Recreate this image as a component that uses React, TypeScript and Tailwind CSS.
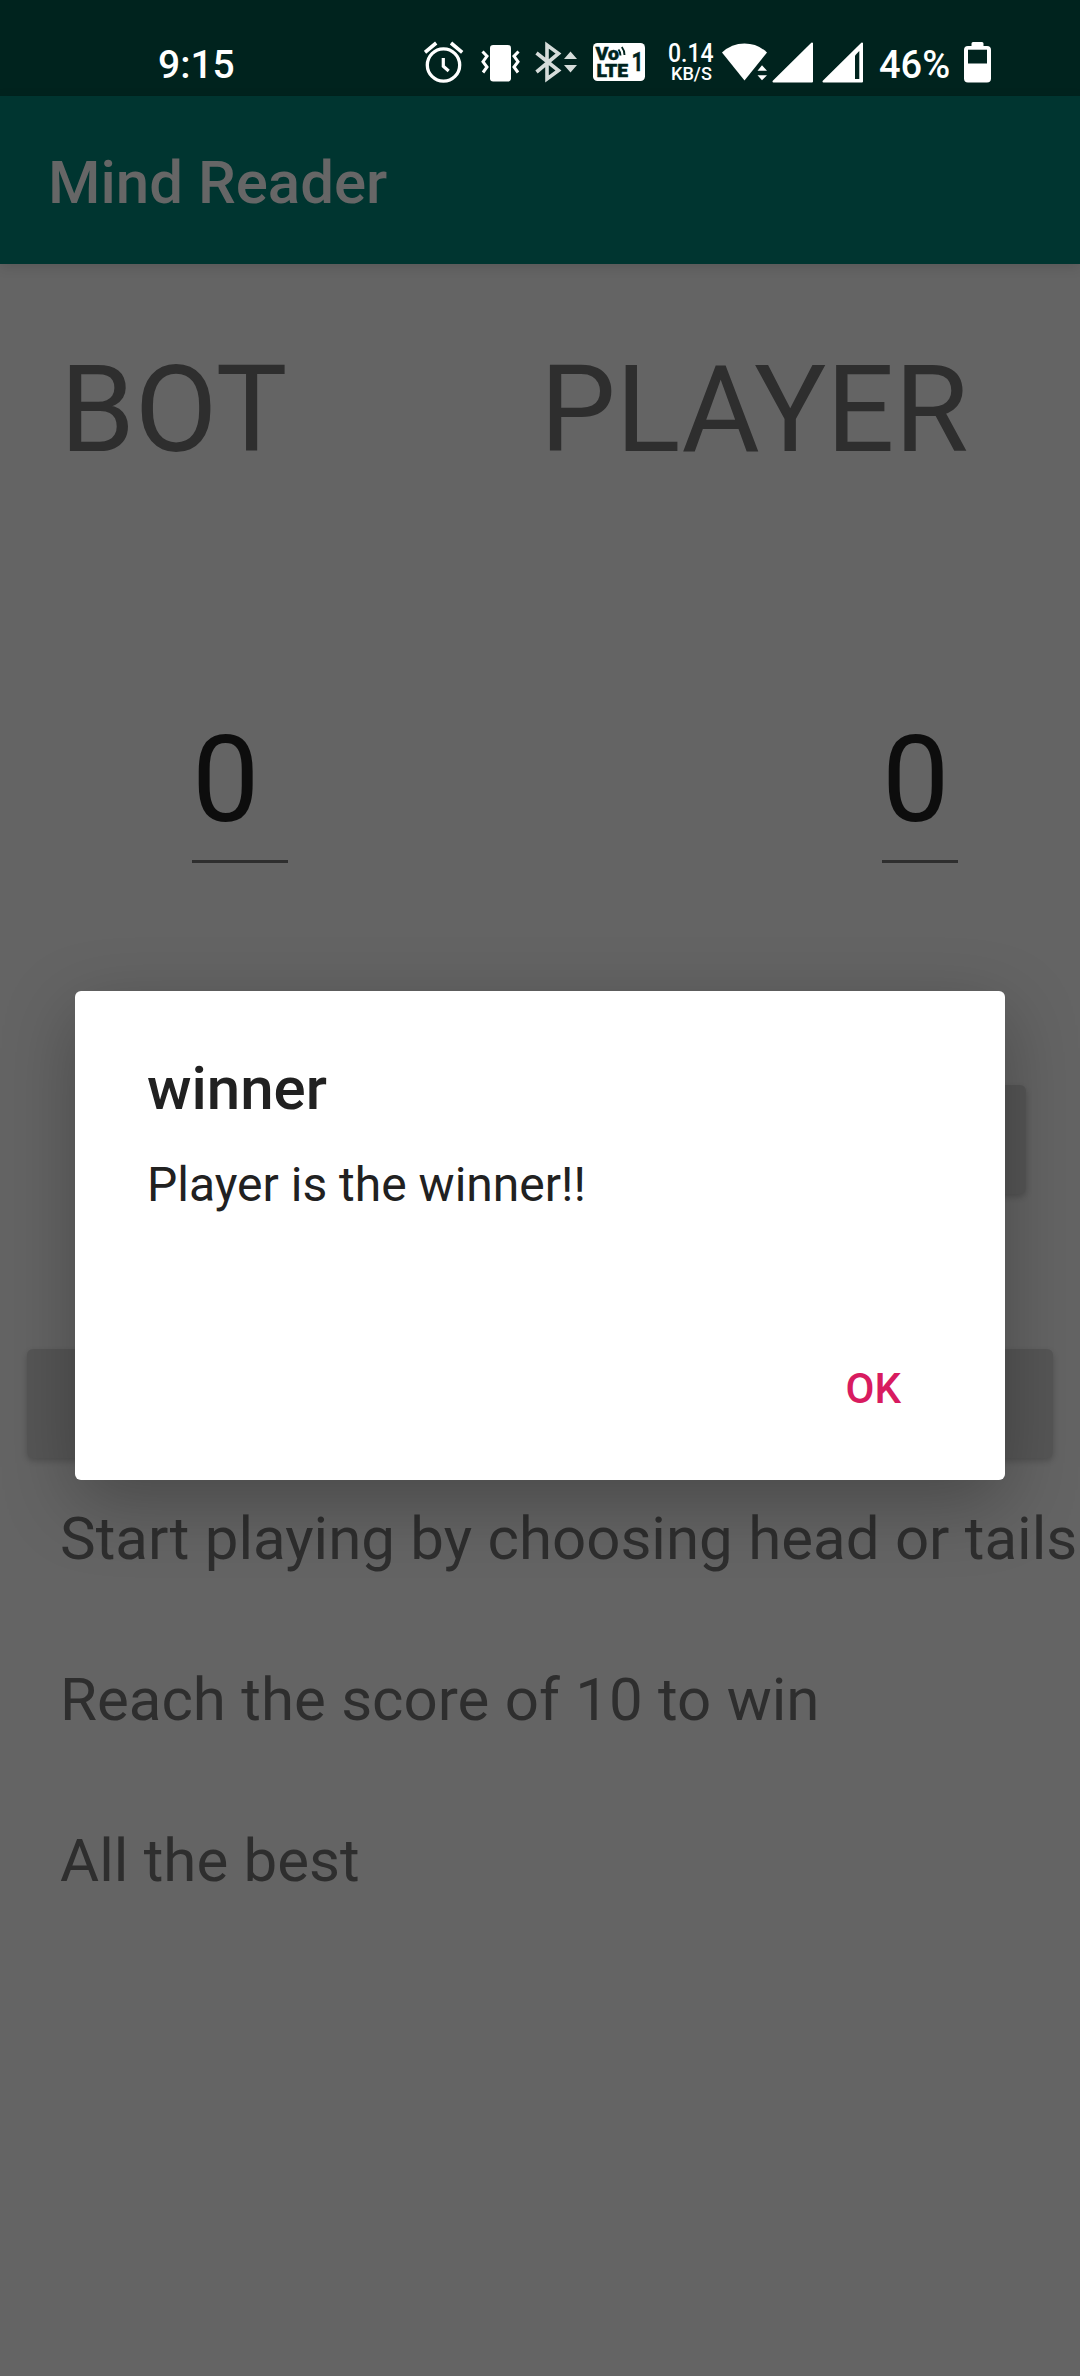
import React from "react";

function AlarmIcon() {
  return (
    <svg className="absolute left-[424px] top-[40px]" width="40" height="44" viewBox="0 0 40 44" fill="none" stroke="#fff">
      <circle cx="19.5" cy="25" r="16.2" strokeWidth="3.3" />
      <path d="M19.3 18v8.2l5.4 4.8" strokeWidth="3.2" />
      <path d="M1 12.3 12.2 3M27 3l11.2 9.3" strokeWidth="3.6" />
    </svg>
  );
}

function VibrateIcon() {
  return (
    <svg className="absolute left-[480px] top-[44px]" width="41" height="40" viewBox="0 0 41 40" fill="none">
      <rect x="10" y="1" width="21" height="36.5" rx="3.2" fill="#fff" />
      <path d="m2.500 7.500 4.500 4.700-4 5.500 4 5.300-4 5.500" stroke="#fff" strokeWidth="3" />
      <path d="m38.500 7.500-4.500 4.700 4 5.500-4 5.300 4 5.500" stroke="#fff" strokeWidth="3" />
    </svg>
  );
}

function BluetoothIcon() {
  return (
    <svg className="absolute left-[534px] top-[40px]" width="44" height="44" viewBox="0 0 44 44">
      <path d="M2.500 13 24.500 30.500 13 39V5l11.500 8.500L2.500 32" fill="none" stroke="#d5dcda" strokeWidth="3.600" strokeLinejoin="miter" />
      <path d="M36.500 11.500 43 19H30zM36.500 32.500 43 25H30z" fill="#d5dcda" />
    </svg>
  );
}

function VolteIcon() {
  return (
    <svg className="absolute left-[593px] top-[43px]" width="52" height="38" viewBox="0 0 52 38">
      <rect width="52" height="38" rx="4.500" fill="#fff" />
      <g fill="#00231e" stroke="#00231e" fontFamily="Roboto" fontWeight="900">
        <text x="2.500" y="17" fontSize="19" strokeWidth=".5" textLength="23.500" lengthAdjust="spacingAndGlyphs">Vo</text>
        <text x="3.500" y="34" fontSize="18.500" strokeWidth=".5" textLength="31.500" lengthAdjust="spacingAndGlyphs">LTE</text>
        <text x="38.500" y="28" fontSize="26" fontWeight="700" strokeWidth=".4" textLength="12" lengthAdjust="spacingAndGlyphs">1</text>
      </g>
      <path d="M25.500 6.500q2 2.500 2 6M28.800 4q2.700 3.500 2.700 8" fill="none" stroke="#00231e" strokeWidth="1.900" />
    </svg>
  );
}

function WifiIcon() {
  return (
    <svg className="absolute left-[722px] top-[43px]" width="46" height="38" viewBox="0 0 46 38" fill="#fff">
      <path d="M0 9.500Q9.500.500 22.500.500T45 9.500L22.500 37.500z" />
      <path d="M34 38V27l6-7h6v18z" fill="#00231e" />
      <path d="M40 22.200 45 27.700H35.500zM40 37.200 45 32.200H35.500z" />
    </svg>
  );
}

function SignalFull() {
  return (
    <svg className="absolute left-[772px] top-[42px]" width="42" height="41" viewBox="0 0 42 41">
      <path d="M1.500 39.500 40 1.500v38z" fill="#fff" stroke="#fff" strokeWidth="2" strokeLinejoin="round" />
    </svg>
  );
}

function SignalPartial() {
  return (
    <svg className="absolute left-[822px] top-[42px]" width="42" height="41" viewBox="0 0 42 41">
      <path d="M1.500 39.500 40 1.500v38z" fill="#fff" stroke="#fff" strokeWidth="2" strokeLinejoin="round" />
      <path d="M33 13.500 37.300 9v28H33z" fill="#00231e" />
    </svg>
  );
}

function BatteryIcon() {
  return (
    <svg className="absolute left-[963px] top-[42px]" width="29" height="41" viewBox="0 0 29 41">
      <path d="M10 0h9q1.500 0 1.500 1.500V4h3.500q4 0 4 4v28.500q0 4-4 4H5q-4 0-4-4V8q0-4 4-4h3.500V1.500Q8.500 0 10 0z" fill="#fff" />
      <path d="M5 7.700h19v13.800H5z" fill="#00231e" />
    </svg>
  );
}

function StatusBar() {
  return (
    <header className="relative h-24 shrink-0 bg-[#00231e] font-medium text-white">
      <span className="absolute left-[158px] top-[45px] text-[39px] leading-[40px]">9:15</span>
      <AlarmIcon />
      <VibrateIcon />
      <BluetoothIcon />
      <VolteIcon />
      <div className="absolute left-[661px] top-[42px] flex w-[60px] flex-col items-center">
        <span className="scale-x-[0.92] text-[25px] leading-[23px]">0.14</span>
        <span className="mt-px scale-x-95 text-[19px] leading-[16px]">KB/S</span>
      </div>
      <WifiIcon />
      <SignalFull />
      <SignalPartial />
      <span className="absolute left-[879px] top-[45px] origin-left scale-x-[0.975] text-[39px] leading-[40px]">46%</span>
      <BatteryIcon />
    </header>
  );
}

const hints = ["Start playing by choosing head or tails", "Reach the score of 10 to win", "All the best"];

export default function App() {
  return (
    <div className="relative flex h-[2376px] w-[1080px] flex-col overflow-hidden bg-[#646464] font-['Roboto',sans-serif] text-[#2e2e2e]">
      <StatusBar />
      <div className="z-10 flex h-[168px] shrink-0 items-center bg-[#003530] px-12 pt-[5px] shadow-[0_3px_12px_rgba(0,0,0,0.12)]">
        <h1 className="text-[60px] font-medium leading-[71px] text-[#666666]">Mind Reader</h1>
      </div>

      <main className="flex flex-col">
        <div className="mt-[66px] flex text-[120px] leading-[160px]">
          <span className="ml-[60px] w-[480px]">BOT</span>
          <span>PLAYER</span>
        </div>

        <div className="mt-[230px] flex justify-between pl-[192px] pr-[122px] text-[120px] leading-[120px] text-[#0d0d0d]">
          <div className="w-[96px] border-b-[3px] border-[#2e2e2e] pb-5">0</div>
          <div className="w-[76px] border-b-[3px] border-[#2e2e2e] pb-5">0</div>
        </div>

        <div className="mr-[54px] mt-[222px] h-[109px] w-[300px] self-end rounded-md bg-[#565656] shadow-[0_3px_6px_rgba(0,0,0,0.2)]" />
        <div className="mx-[27px] mt-[155px] h-[109px] rounded-md bg-[#565656] shadow-[0_3px_6px_rgba(0,0,0,0.2)]" />

        <div className="ml-[60px] mt-[45px] flex flex-col gap-[90px] whitespace-nowrap text-[60px] leading-[71px] [word-spacing:0.5px]">
          {hints.map((hint) => (
            <p key={hint}>{hint}</p>
          ))}
        </div>
      </main>

      <div
        role="dialog"
        className="absolute left-[75px] top-[991px] z-20 flex h-[489px] w-[930px] flex-col rounded-md bg-white px-[72px] text-[#212121] shadow-[0_22px_72px_rgba(0,0,0,0.28)]"
      >
        <h2 className="mt-[62px] text-[60px] font-medium leading-[71px]">winner</h2>
        <p className="mt-8 text-[48px] leading-[57px]">Player is the winner!!</p>
        <button className="mr-[32px] mt-[151px] self-end text-[42px] font-medium leading-[49px] text-[#d81b60]">OK</button>
      </div>
    </div>
  );
}
